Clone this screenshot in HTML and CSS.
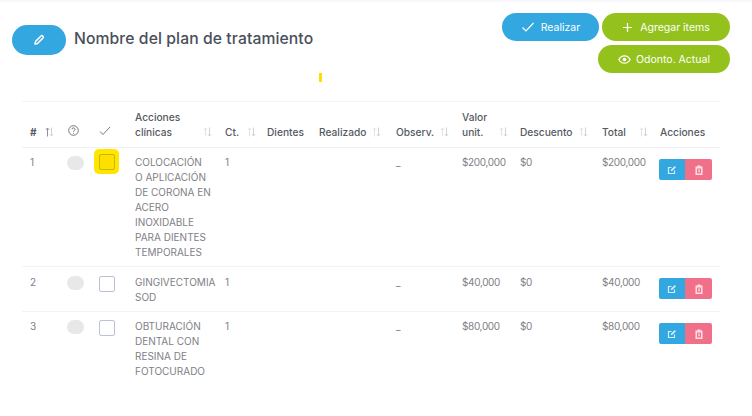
FILE: index.html
```html
<!DOCTYPE html>
<html lang="es">
<head>
<meta charset="utf-8">
<title>Plan de tratamiento</title>
<link rel="stylesheet" href="styles.css">
</head>
<body>
<svg class="defs" width="0" height="0" aria-hidden="true">
  <symbol id="sort" viewBox="0 0 9 10"><path d="M2.500 9.500V1M.8 2.800L2.500 1l1.700 1.800" fill="none" stroke="#e2e2e6" stroke-width="1"/><path d="M6.500 .5V9M4.800 7.200L6.500 9l1.700-1.800" fill="none" stroke="#d2d2d6" stroke-width="1"/></symbol>
  <symbol id="sort-on" viewBox="0 0 9 10"><path d="M2.500 9.500V1M.8 2.800L2.500 1l1.700 1.800" fill="none" stroke="#8f9399" stroke-width="1"/><path d="M6.500 .5V9M4.800 7.200L6.500 9l1.700-1.800" fill="none" stroke="#d2d2d6" stroke-width="1"/></symbol>
  <symbol id="edit" viewBox="0 0 10 10"><path d="M7.500 5.500V8.500H1.500V2.500H4.500" fill="none" stroke="#d2edfb" stroke-width="1.200"/><path d="M3.800 6.200L4.200 4.500L7.800 1L9 2.200L5.400 5.800z" fill="#d2edfb"/></symbol>
  <symbol id="trash" viewBox="0 0 10 10"><path d="M3.500 .5h3v1H8.500v8.500h-7V1.500h2zM3 3.500V8.500H7V3.500zM4 4.500h2v1H4zM4 6.200h2v1H4z" fill="#ffdfe5" fill-rule="evenodd"/></symbol>
</svg>
<div class="topline"></div>
<header class="head">
  <div class="title-wrap">
    <button class="pill pill-blue pill-edit" aria-label="Editar">
      <svg width="12" height="12" viewBox="0 0 12 12"><path d="M2 10l.6-2.6L8 2a1.2 1.2 0 0 1 1.8 0l.2.2a1.2 1.2 0 0 1 0 1.8L4.600 9.400z" fill="none" stroke="#fff" stroke-width="1.500" stroke-linejoin="round"/></svg>
    </button>
    <h1 class="title">Nombre del plan de tratamiento</h1>
  </div>
  <div class="actions">
    <div class="actions-row">
      <button class="pill pill-blue pill-real">
        <svg width="14" height="12" viewBox="0 0 14 12"><path d="M1.500 6.500l3.500 3.500L12.500 2" fill="none" stroke="#fff" stroke-width="1.200"/></svg>
        Realizar
      </button>
      <button class="pill pill-green pill-add">
        <svg width="11" height="11" viewBox="0 0 11 11"><path d="M5.500 1v9M1 5.500h9" stroke="#fff" stroke-width="1.200"/></svg>
        Agregar items
      </button>
    </div>
    <button class="pill pill-green pill-odo">
      <svg width="13" height="9" viewBox="0 0 13 9"><path d="M.8 4.500C2.200 2 4.200 .8 6.500 .8s4.300 1.200 5.700 3.700c-1.400 2.500-3.400 3.700-5.700 3.700S2.200 7 .8 4.500z" fill="none" stroke="#fff" stroke-width="1.200"/><circle cx="6.500" cy="4.500" r="1.800" fill="#fff"/></svg>
      Odonto. Actual
    </button>
  </div>
</header>
<div class="marker-row"><span class="marker"></span></div>
<table class="grid">
  <colgroup>
    <col class="c-num"><col class="c-q"><col class="c-chk"><col class="c-acc"><col class="c-ct"><col class="c-die"><col class="c-rea"><col class="c-obs"><col class="c-val"><col class="c-des"><col class="c-tot"><col class="c-act">
  </colgroup>
  <thead>
    <tr>
      <th><span class="hd hd-strong">#<svg class="sort s-num"><use href="#sort-on"/></svg></span></th>
      <th class="center"><svg class="ic-q" width="11" height="11" viewBox="0 0 11 11"><circle cx="5.500" cy="5.500" r="4.800" fill="none" stroke="#555" stroke-width=".8"/><path d="M4 4.400a1.500 1.500 0 1 1 2.300 1.200c-.5.300-.8.600-.8 1.100" fill="none" stroke="#555" stroke-width=".8"/><circle cx="5.500" cy="8.200" r=".5" fill="#555"/></svg></th>
      <th class="center"><svg class="ic-c" width="12" height="10" viewBox="0 0 12 10"><path d="M1 5.500l3 3L11 1" fill="none" stroke="#666" stroke-width=".9"/></svg></th>
      <th><span class="hd">Acciones<br>clínicas<svg class="sort s-acc"><use href="#sort"/></svg></span></th>
      <th><span class="hd">Ct.<svg class="sort s-ct"><use href="#sort"/></svg></span></th>
      <th><span class="hd">Dientes</span></th>
      <th><span class="hd">Realizado<svg class="sort s-rea"><use href="#sort"/></svg></span></th>
      <th><span class="hd">Observ.<svg class="sort s-obs"><use href="#sort"/></svg></span></th>
      <th><span class="hd">Valor<br>unit.<svg class="sort s-val"><use href="#sort"/></svg></span></th>
      <th><span class="hd">Descuento<svg class="sort s-des"><use href="#sort"/></svg></span></th>
      <th><span class="hd">Total<svg class="sort s-tot"><use href="#sort"/></svg></span></th>
      <th><span class="hd">Acciones</span></th>
    </tr>
  </thead>
  <tbody>
    <tr class="r1">
      <td>1</td>
      <td class="center"><span class="toggle"></span></td>
      <td class="center"><span class="hilite"><span class="box box-on"></span></span></td>
      <td>COLOCACIÓN<br>O APLICACIÓN<br>DE CORONA EN<br>ACERO<br>INOXIDABLE<br>PARA DIENTES<br>TEMPORALES</td>
      <td>1</td><td></td><td></td><td>_</td>
      <td class="money">$200,000</td><td class="money">$0</td><td class="money">$200,000</td>
      <td><div class="btns"><button class="mini mini-blue" aria-label="Editar"><svg width="10" height="10"><use href="#edit"/></svg></button><button class="mini mini-red" aria-label="Borrar"><svg width="10" height="10"><use href="#trash"/></svg></button></div></td>
    </tr>
    <tr class="r2">
      <td>2</td>
      <td class="center"><span class="toggle"></span></td>
      <td class="center"><span class="box"></span></td>
      <td>GINGIVECTOMIA<br>SOD</td>
      <td>1</td><td></td><td></td><td>_</td>
      <td class="money">$40,000</td><td class="money">$0</td><td class="money">$40,000</td>
      <td><div class="btns"><button class="mini mini-blue" aria-label="Editar"><svg width="10" height="10"><use href="#edit"/></svg></button><button class="mini mini-red" aria-label="Borrar"><svg width="10" height="10"><use href="#trash"/></svg></button></div></td>
    </tr>
    <tr class="r3">
      <td>3</td>
      <td class="center"><span class="toggle"></span></td>
      <td class="center"><span class="box"></span></td>
      <td>OBTURACIÓN<br>DENTAL CON<br>RESINA DE<br>FOTOCURADO</td>
      <td>1</td><td></td><td></td><td>_</td>
      <td class="money">$80,000</td><td class="money">$0</td><td class="money">$80,000</td>
      <td><div class="btns"><button class="mini mini-blue" aria-label="Editar"><svg width="10" height="10"><use href="#edit"/></svg></button><button class="mini mini-red" aria-label="Borrar"><svg width="10" height="10"><use href="#trash"/></svg></button></div></td>
    </tr>
  </tbody>
</table>
</body>
</html>
```
FILE: styles.css
```css
* { box-sizing: border-box; }
html, body { margin: 0; padding: 0; }
body {
  width: 752px;
  height: 416px;
  overflow: hidden;
  background: #fff;
  font-family: "Inter", "Open Sans", sans-serif;
  color: #555;
}
.defs { display: block; height: 0; }
.topline { height: 2px; background: #f7f7fb; }
.head {
  display: flex;
  justify-content: space-between;
  align-items: flex-start;
  padding: 11px 22px 0 12px;
  height: 66px;
}
.title-wrap { display: flex; align-items: flex-start; gap: 8px; padding-top: 12px; }
.title {
  margin: 1px 0 0;
  font-size: 15.700px;
  font-weight: 500;
  line-height: 26px;
  color: #4a4f5a;
  letter-spacing: .1px;
}
.pill {
  display: inline-flex;
  align-items: center;
  justify-content: center;
  border: 0;
  border-radius: 15px;
  color: #fff;
  font-family: inherit;
  font-size: 10.500px;
  padding: 0;
}
.pill-blue { background: #33a7e0; }
.pill-green { background: #94c11c; }
.pill-edit { width: 54px; height: 30px; }
.pill-real { width: 97px; height: 28px; gap: 6px; }
.pill-add { width: 128px; height: 28px; gap: 7px; }
.pill-odo { width: 132px; height: 28px; gap: 5px; }
.actions { display: flex; flex-direction: column; align-items: flex-end; gap: 4px; }
.actions-row { display: flex; gap: 3px; }
.marker-row { height: 33px; padding: 5px 0 0 319px; }
.marker { display: block; width: 3px; height: 9px; background: #ffdd00; }
.grid {
  margin-left: 22px;
  width: 698px;
  table-layout: fixed;
  border-collapse: collapse;
  font-size: 10px;
  color: #808086;
}
.c-num { width: 43px; } .c-q { width: 21px; } .c-chk { width: 41px; }
.c-acc { width: 90px; } .c-ct { width: 42px; } .c-die { width: 52px; }
.c-rea { width: 77px; } .c-obs { width: 66px; } .c-val { width: 58px; }
.c-des { width: 82px; } .c-tot { width: 58px; } .c-act { width: 68px; }
th, td { padding: 0 0 0 8px; vertical-align: top; }
th {
  border-top: 1px solid #f4f4f4;
  border-bottom: 1px solid #f0f0f0;
  height: 46px;
  padding-top: 7px;
  padding-bottom: 7px;
  vertical-align: bottom;
  text-align: left;
  font-weight: 500;
  font-size: 10.200px;
  line-height: 15px;
  color: #555a63;
}
.hd { display: block; white-space: nowrap; }
.hd-strong { font-weight: 700; }
.sort { width: 9px; height: 10px; vertical-align: -1px; }
.s-num { margin-left: 8px; }
.s-acc { margin-left: 31px; }
.s-ct { margin-left: 8px; }
.s-rea { margin-left: 6px; }
.s-obs { margin-left: 6px; }
.s-val { margin-left: 16px; }
.s-des { margin-left: 7px; }
.s-tot { margin-left: 13px; }
th.center { text-align: center; padding-left: 0; }
.ic-q { margin-right: 5px; }
.ic-c { margin-right: 3px; }
td { line-height: 15px; padding-top: 7px; }
td.center { text-align: center; padding-left: 0; }
td.money { letter-spacing: -.35px; }
tbody tr { border-bottom: 1px solid #f3f3f3; }
.r1 { height: 119px; }
.r2 { height: 45px; }
.r2 td { padding-top: 8px; }
.r3 { height: 74px; border-bottom: 0; }
.toggle { display: inline-block; width: 17px; height: 14px; margin-top: 1px; border-radius: 7px; background: #e8e8e8; }
.box { display: inline-block; width: 16px; height: 16px; margin-top: 1px; border: 1px solid #bcc1d8; border-radius: 2px; background: #fff; }
.box-on { margin-top: 0; background: #ffdf00; border: 1px solid #c4b800; }
.hilite { display: inline-flex; align-items: center; justify-content: center; width: 25px; height: 25px; margin-top: -6px; border-radius: 5px; background: #ffe600; }
.btns { display: flex; margin: 4px 0 0 -1px; }
.r2 .btns { margin-top: 3px; }
.mini { display: flex; align-items: center; justify-content: center; width: 26px; height: 21px; padding: 0; border: 0; }
.mini-blue { background: #33a7e0; border-radius: 2px 0 0 2px; }
.mini-red { width: 27px; background: #f0708a; border-radius: 0 2px 2px 0; }
```
